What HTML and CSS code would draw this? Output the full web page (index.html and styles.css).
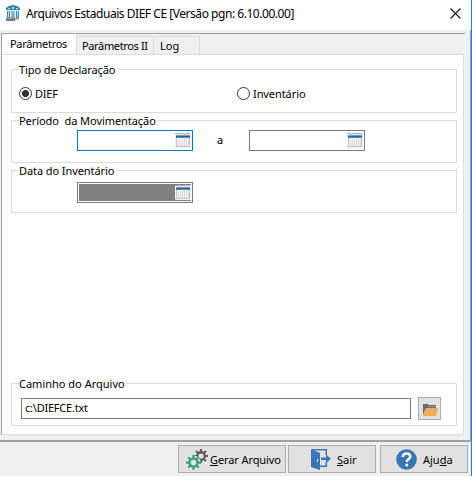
FILE: index.html
```html
<!DOCTYPE html>
<html lang="pt-BR">
<head>
<meta charset="utf-8">
<title>Arquivos Estaduais DIEF CE</title>
<link rel="stylesheet" href="styles.css">
</head>
<body>
<svg width="0" height="0" class="defs">
  <symbol id="calendar" viewBox="0 0 16 15">
    <path fill="#f2f2f2" d="M0 0h16v15H0z"/>
    <path fill="#aaa" d="M0 0h4v1H0zM5 0h5v1H5zM11 0h4v1h-4z"/>
    <path fill="#6c9ac6" d="M1 2h14v1H1z"/>
    <path fill="#2468ac" d="M1 3h14v1H1z"/>
    <path fill="#4f87bd" d="M1 4h14v1H1z"/>
    <path fill="#9aa6b0" d="M4 1h1v2H4zM10 1h1v2h-1z"/>
    <path fill="#dcdcdc" d="M3 7h1v6H3zM5 7h1v6H5zM7 6h1v7H7zM9 6h1v7H9zM11 6h1v7h-1zM13 6h1v7h-1z"/>
    <path fill="#c4c4c4" d="M1 5h1v8H1zM14 5h1v8h-1zM1 13h14v1H1zM0 14h1v1H0z"/>
  </symbol>
  <symbol id="gear" viewBox="-8 -8 16 16">
    <circle r="4.3" fill="none" stroke="currentColor" stroke-width="2.6"/>
    <g fill="currentColor">
      <path id="teeth" d="M-1.2-8h2.4v3.500h-2.4zM-1.2 4.5h2.4V8h-2.4zM-8-1.2h3.500v2.4H-8zM4.5-1.2H8v2.4H4.500z"/>
      <use href="#teeth" transform="rotate(45)"/>
    </g>
  </symbol>
</svg>
<div class="window">
  <header class="titlebar">
    <svg class="app-icon" width="16" height="17" viewBox="0 0 16 17">
      <path fill="#2887b8" d="M1 5V3l3-2 4-1 4 1 3 2v2zM2 6h3v7H2zM6.500 6h3v7h-3zM11 6h3v7h-3z"/>
      <path fill="#c6e1ee" d="M3 3h2v1H3zM7 2h2v2H7zM11 3h2v1h-2zM3 6h1v6H3zM7.500 6h1v6h-1zM12 6h1v6h-1z"/>
      <path fill="#95999c" d="M2 12h5l2 1 5-1v2l-4 1H1v-2z"/>
      <path fill="#74797d" d="M1 14h9v2H1z"/>
    </svg>
    <h1 class="t-title">Arquivos Estaduais DIEF CE [Versão pgn: 6.10.00.00]</h1>
    <svg class="close" width="11" height="11" viewBox="0 0 11 11"><path d="M.5.5l10 10M10.500.5l-10 10" stroke="#111" stroke-width="1.100"/></svg>
  </header>
  <main class="frame">
    <nav class="tabs">
      <span class="tab active"><b class="t-par">Parâmetros</b></span>
      <span class="tab second"><b class="t-par2">Parâmetros II</b></span>
      <span class="tab third"><b>Log</b></span>
    </nav>
    <div class="page">
      <section class="group type">
        <h2><b class="t-tipo">Tipo de Declaração</b></h2>
        <div class="radios">
          <label><i class="radio checked"></i><b class="t-dief">DIEF</b></label>
          <label><i class="radio"></i><b class="t-inv">Inventário</b></label>
        </div>
      </section>
      <section class="group period">
        <h2><b class="t-per">Período&nbsp; da Movimentação</b></h2>
        <div class="dates">
          <div class="date focus"><svg width="16" height="15"><use href="#calendar"/></svg></div>
          <span class="until">a</span>
          <div class="date"><svg width="16" height="15"><use href="#calendar"/></svg></div>
        </div>
      </section>
      <section class="group stock">
        <h2><b class="t-data">Data do Inventário</b></h2>
        <div class="dates">
          <div class="date disabled"><svg width="16" height="15"><use href="#calendar"/></svg></div>
        </div>
      </section>
      <section class="group path">
        <h2><b>Caminho do Arquivo</b></h2>
        <div class="file">
          <div class="field"><b class="t-file">c:\DIEFCE.txt</b></div>
          <div class="browse">
            <svg width="16" height="14" viewBox="0 0 16 14"><path fill="#666a6d" d="M1 1h5l1 1h7v3H4L1 12z"/><path fill="#9b9b9b" d="M6 3h8v1H6z"/><path fill="#ecae58" d="M4 5h12l-2 8H1z"/></svg>
          </div>
        </div>
      </section>
    </div>
  </main>
  <footer class="actions">
    <button class="generate">
      <svg width="22" height="21" viewBox="0 0 22 21"><g color="#5c5c5c"><use href="#gear" x="8" y="0" width="14" height="14"/></g><circle cx="7.500" cy="13.500" r="7" fill="#e4e4e4"/><g color="#36a57a"><use href="#gear" x="0" y="6" width="15" height="15"/></g></svg>
      <b class="t-ger"><u>G</u>erar Arquivo</b>
    </button>
    <button class="exit">
      <svg width="20" height="21" viewBox="0 0 20 21"><path fill="none" stroke="#3a76b4" stroke-width="1.500" d="M1 .8h14.300V6M15.300 13v4.300H9"/><path fill="#3a76b4" d="M0 0l9 4v17l-9-3z"/><path fill="#e1e1e1" d="M6 10h1v3H6z"/><path fill="#3a76b4" d="M10 8.500h5V5.500l5 4.200-5 4.200V11h-5z"/></svg>
      <b class="t-sair"><u>S</u>air</b>
    </button>
    <button class="help">
      <svg width="21" height="21" viewBox="0 0 21 21"><circle cx="10.500" cy="10.500" r="10.300" fill="#3a76b4"/><path fill="none" stroke="#fff" stroke-width="2.500" d="M6.800 8c.2-4.600 7.600-4.400 7.500-.4 0 2.500-3.500 2.500-3.500 5.400"/><circle cx="10.800" cy="16" r="1.500" fill="#fff"/></svg>
      <b class="t-aju">Aju<u>d</u>a</b>
    </button>
  </footer>
</div>
</body>
</html>
```
FILE: styles.css
```css
* { box-sizing: border-box; }
body { margin: 0; background: #fff; font: 11px/16px "Noto Sans", "Open Sans", sans-serif; color: #000; }
b, h1, h2 { font-weight: 400; font-size: inherit; margin: 0; white-space: nowrap; }
svg { display: block; flex: none; }
.defs { position: absolute; }
.window { width: 472px; height: 476px; border-right: 1px solid #1883d7; background: #f0f0f0; display: flex; flex-direction: column; }
.titlebar { height: 30px; background: #fff; display: flex; align-items: center; padding: 0 10px 3px 5px; }
.app-icon { margin-right: 5px; }
.titlebar h1 { font-size: 12px; letter-spacing: -.46px; }
.close { margin-left: auto; }
.frame { height: 412px; padding: 3px 4px 5px 1px; border-right: 1px solid #a0a0a0; border-bottom: 2px solid #a0a0a0; display: flex; flex-direction: column; }
.tabs { height: 21px; border-top: 1px solid #a0a0a0; border-left: 1px solid #a0a0a0; border-right: 1px solid #fff; display: flex; align-items: flex-end; }
.tab { height: 18px; border: 1px solid #dcdcdc; border-left: 0; border-bottom: 0; padding-left: 5px; line-height: 18px; }
.tab.active { width: 75px; height: 20px; border-top: 0; background: #fff; padding-left: 8px; line-height: 20px; }
.tab.second { width: 77px; }
.tab.third { width: 46px; padding-left: 6px; }
.t-par { letter-spacing: -.3px; }
.t-par2 { letter-spacing: -.36px; }
.t-tipo { letter-spacing: -.1px; }
.t-dief, .t-file { letter-spacing: -.22px; }
.t-inv, .t-data { letter-spacing: -.08px; }
.t-per { letter-spacing: -.06px; }
.t-ger { letter-spacing: -.1px; }
.page { height: 381px; margin-right: 2px; border: 1px solid #dcdcdc; border-left-color: #a0a0a0; background: #fff; padding: 14px 6px 8px 9px; display: flex; flex-direction: column; }
.group { width: 446px; border: 1px solid #dcdcdc; height: 43px; margin-bottom: 7px; flex: none; }
.group h2 { height: 14px; line-height: 14px; margin: -7px 0 0 7px; width: max-content; background: #fff; padding-right: 1px; }
.group.type { height: 44px; }
.group.type h2 { padding-right: 3px; }
.group.stock h2 { padding-right: 3px; }
.path { margin-top: auto; margin-bottom: 0; }
.radios { display: grid; grid-template-columns: 218px 1fr; padding: 8px 0 0 7px; }
.radios label { display: flex; align-items: center; gap: 3px; height: 17px; }
.radio { width: 13px; height: 13px; border: 1px solid #333; border-radius: 50%; }
.radio.checked { background: radial-gradient(circle, #333 3.2px, #fff 3.8px); }
.dates { display: flex; padding: 2px 0 0 65px; }
.stock .dates { padding-top: 4px; }
.date { width: 116px; height: 21px; border: 1px solid #7a7a7a; padding: 2px 1px 0; display: flex; justify-content: flex-end; background: #fff; }
.date.focus { border-color: #0078d7; }
.date.disabled { background: #808080; box-shadow: inset 0 0 0 1px #fff; }
.until { width: 56px; text-align: center; padding: 2px 2px 0 0; }
.file { display: flex; align-items: center; gap: 7px; padding: 6px 0 0 9px; }
.field { width: 390px; height: 21px; border: 1px solid #7a7a7a; line-height: 18px; padding-left: 3px; }
.browse { width: 23px; height: 23px; border: 1px solid #adadad; background: #e1e1e1; padding: 5px 2px 0 3px; }
.actions { display: flex; height: 34px; padding: 3px 3px 0 178px; }
button { height: 28px; border: 1px solid #adadad; background: #e1e1e1; padding: 0 0 0 7px; display: flex; align-items: center; font: inherit; color: inherit; border-radius: 0; }
button b { padding-top: 2px; }
.generate { width: 108px; gap: 2px; margin-right: 2px; }
.exit { width: 88px; padding-left: 22px; gap: 6px; margin-right: 4px; }
.help { width: 88px; padding-left: 15px; gap: 6px; }
```
